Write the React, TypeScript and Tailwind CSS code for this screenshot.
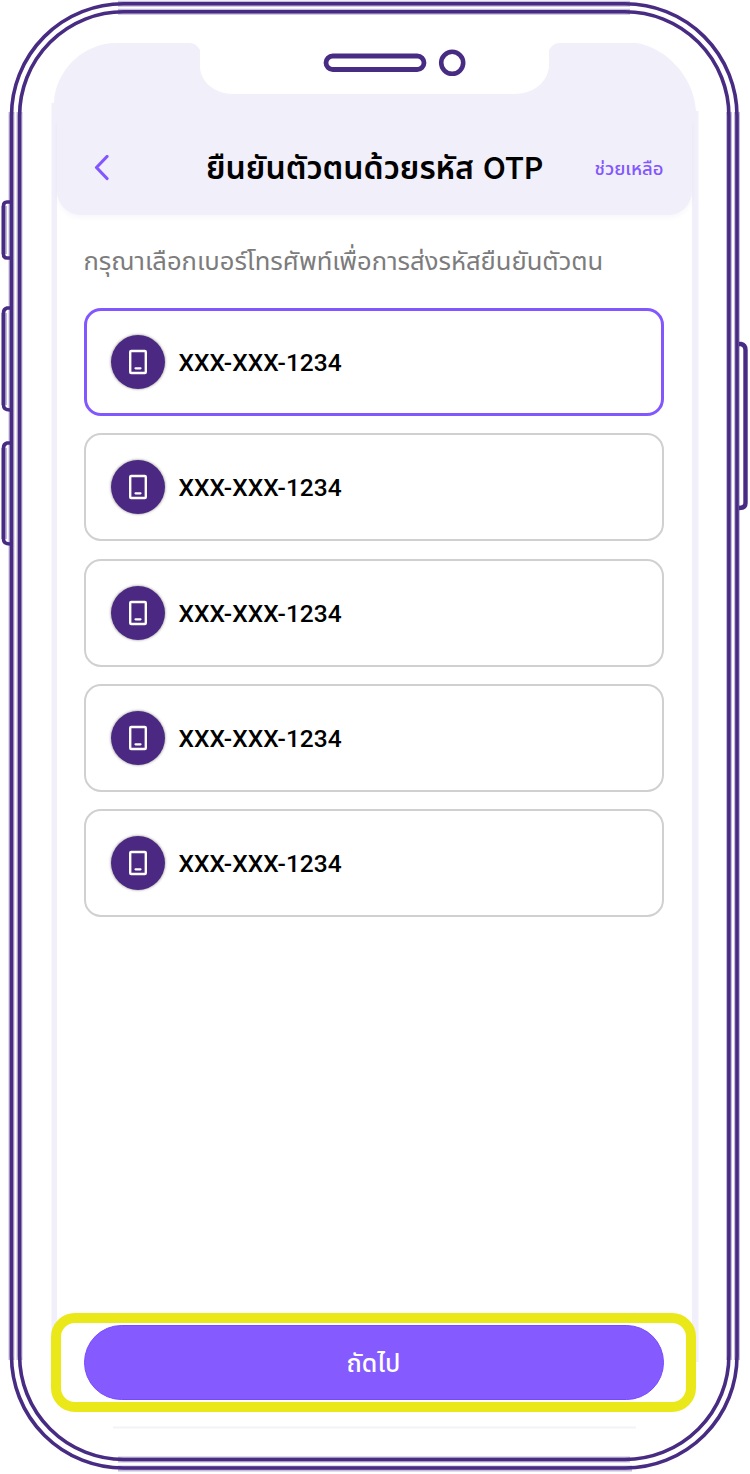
const numbers = [
  "XXX-XXX-1234",
  "XXX-XXX-1234",
  "XXX-XXX-1234",
  "XXX-XXX-1234",
  "XXX-XXX-1234",
];

function PhoneFrame() {
  return (
    <svg className="absolute inset-0" width="750" height="1474" viewBox="0 0 750 1474" fill="none" aria-hidden="true">
      <path
        d="M51.5 103H54C55 71 83 43 116 43H190Q196 43 200 50V68C201 82 215 94 233 94H514C533 94 547 83 549 67V50Q553 43 559 43H636C665 47 694 76 696 111H698.5V1362H692V110H57V1362H51.5Z"
        fill="#f1eff9"
      />
      <path d="M57 100H692V190H57Z" fill="#f1eff9" />
      <g stroke="#c4bcd9" strokeWidth="6">
        <path d="M118 3.800H630M118 11.800H630M11.5 112V1360M19.500 112V1360M729 112V1360M737 112V1360M118 1459.500H630M118 1468.500H632" />
        <path d="M4 206V254M4 313V405M4 448V539" />
      </g>
      <g stroke="#482c83" strokeWidth="3.6">
        <rect x="11.5" y="3.8" width="725.5" height="1464.2" rx="112" />
        <rect x="19.6" y="11.8" width="709.3" height="1447.7" rx="104" />
        <path d="M10 202H7Q3.500 202 3.500 206V254Q3.500 258 7 258H10M10 308H7Q3.500 309 3.500 313V405Q3.500 410 10 410M10 443H7Q3.500 444 3.500 448V539Q3.500 544 10 544" />
        <path d="M739 344H741Q745.500 345 745.500 350V503Q745.500 508 739 508" strokeWidth="4.400" />
        <rect x="326" y="56" width="98" height="13.500" rx="6.750" strokeWidth="4.800" />
        <circle cx="452.200" cy="62.800" r="11" strokeWidth="4.600" />
      </g>
      <path d="M113 1427.500H636" stroke="#f3f2f7" strokeWidth="2" />
    </svg>
  );
}

function PhoneIcon() {
  return (
    <svg width="54" height="54" viewBox="0 0 54 54" fill="none" stroke="white" aria-hidden="true">
      <rect x="19.200" y="16" width="15.600" height="22" rx="1" strokeWidth="2.400" />
      <path d="M24.500 33.300H29.500" strokeWidth="2.200" strokeLinecap="round" />
    </svg>
  );
}

export default function App() {
  return (
    <div className="relative h-[1474px] w-[750px] overflow-hidden bg-white font-['Inter','Noto_Sans_Thai',sans-serif]">
      <PhoneFrame />
      <main className="relative mx-[57px] flex h-full w-[635px] flex-col pt-[120px]">
        <header className="flex h-[95px] shrink-0 items-center rounded-b-[24px] bg-[#f1eff9] px-[28px] shadow-[0_3px_4px_rgba(80,60,160,0.04)]">
          <button aria-label="ย้อนกลับ" className="ml-[8px] flex w-[18px]">
            <svg width="18" height="26" viewBox="0 0 18 26" fill="none" stroke="#8257ff" strokeWidth="3.200" strokeLinecap="round" strokeLinejoin="round">
              <path d="M14 1.500L3.500 12.500L14 23.500" />
            </svg>
          </button>
          <h1 className="ml-[95px] flex w-[338px] items-baseline whitespace-nowrap font-semibold leading-10 text-black">
            <span className="w-[277px] text-[32px]">ยืนยันตัวตนด้วยรหัส</span>
            <span className="text-[29.500px]">OTP</span>
          </h1>
          <a className="ml-[50.500px] whitespace-nowrap text-[18.500px] font-medium leading-7 text-[#8257ff]">
            <span>ช่วยเหลือ</span>
          </a>
        </header>
        <p className="ml-[26.500px] mt-[26px] h-[41px] shrink-0 whitespace-nowrap text-[25.600px] font-normal leading-10 text-[#7c7c7c]">
          <span>กรุณาเลือกเบอร์โทรศัพท์เพื่อการส่งรหัสยืนยันตัวตน</span>
        </p>
        <ul className="ml-[26.500px] mt-[26px] flex w-[580.500px] flex-col gap-[17.300px]">
          {numbers.map((number, i) => (
            <li
              key={i}
              className={`flex h-[108px] items-center rounded-[17px] bg-white ${
                i === 0 ? "border-[3px] border-[#8257ff] pl-[24px]" : "border-2 border-[#d0d0d0] pl-[25px]"
              }`}
            >
              <span className="flex size-[54px] items-center justify-center rounded-full bg-[#4b2882] shadow-[0_0_2px_1px_rgba(90,90,80,0.35)]">
                <PhoneIcon />
              </span>
              <span className="ml-[14px] pt-[2px] font-['Roboto',sans-serif] text-[24.500px] font-medium leading-8 text-black">
                {number}
              </span>
            </li>
          ))}
        </ul>
        <div className="-ml-[6px] mb-[62px] mt-auto flex h-[99px] w-[645px] shrink-0 justify-center rounded-[24px] border-[10px] border-[#eae818] bg-white pt-[2px]">
          <button className="flex h-[75px] w-[580px] items-center justify-center rounded-full border border-[#7849ff] bg-[#855bff] pt-[2px] text-[25px] font-medium text-white">
            <span>ถัดไป</span>
          </button>
        </div>
      </main>
    </div>
  );
}
